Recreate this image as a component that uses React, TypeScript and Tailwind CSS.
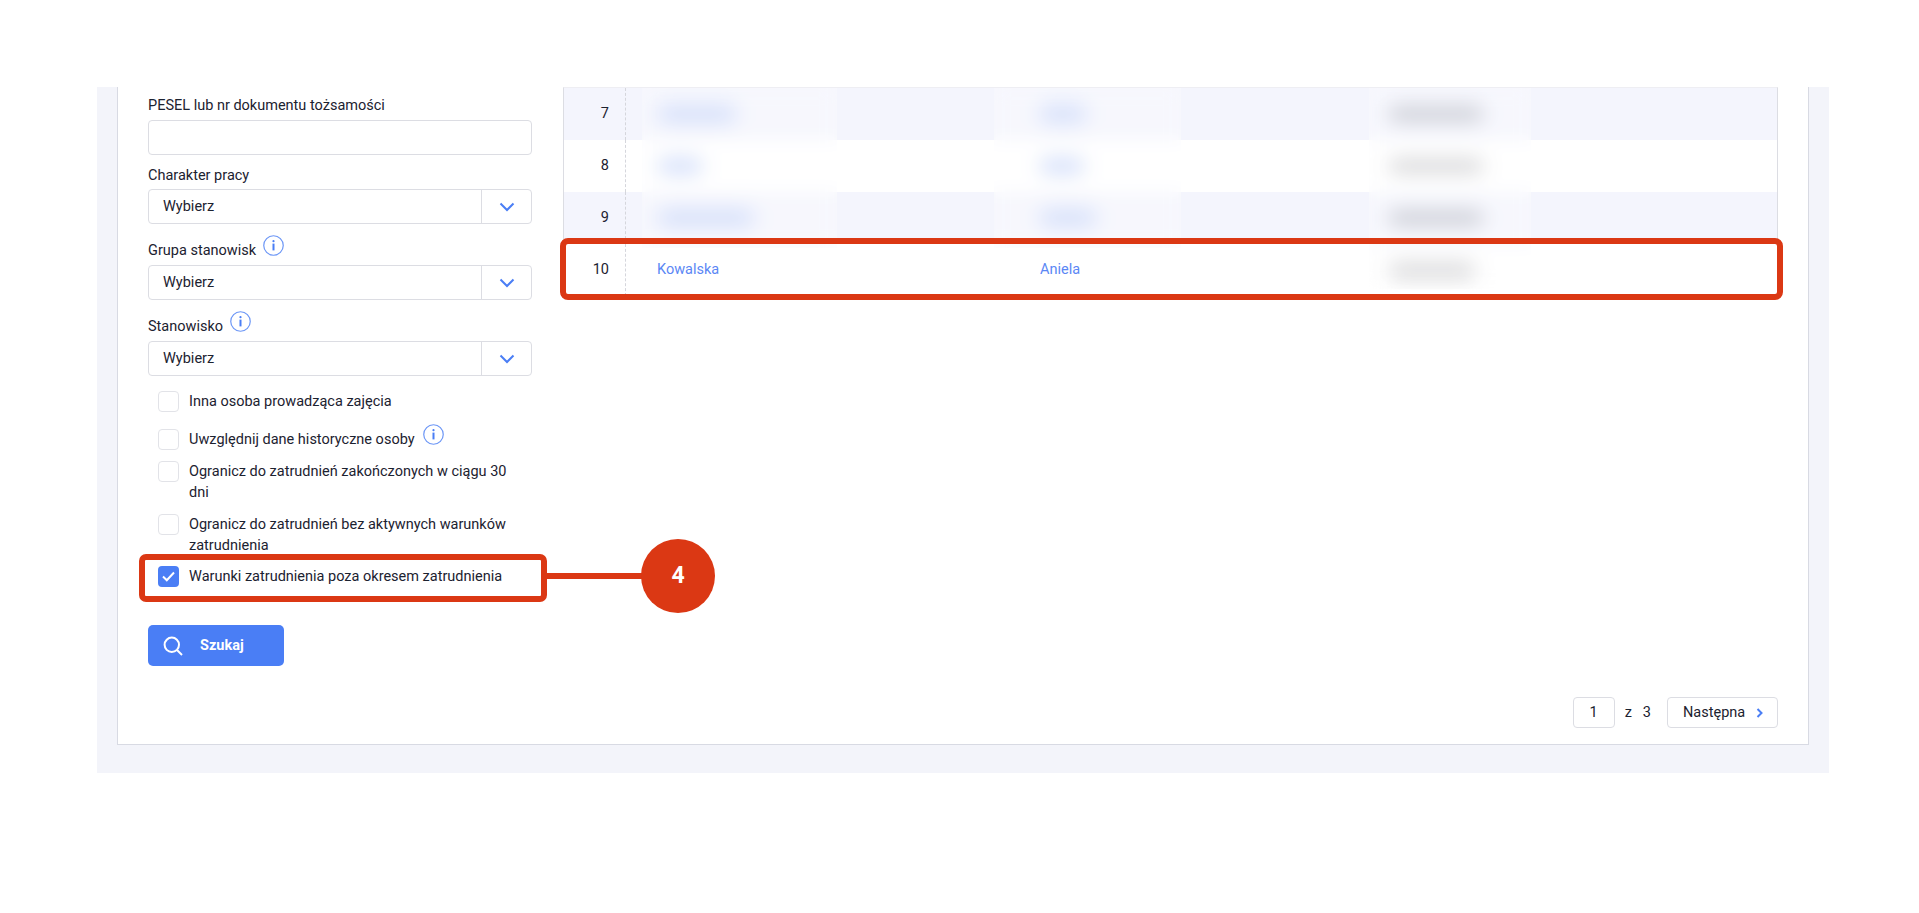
const rows = [
  { no: 7, first: "w-[78px]", second: "w-[46px]", third: "bg-[#b4b7c2]", stripe: true },
  { no: 8, first: "w-[44px]", second: "w-[44px]", third: "bg-[#c6c6c9]", stripe: false },
  { no: 9, first: "w-[96px]", second: "w-[56px]", third: "bg-[#b4b7c2]", stripe: true },
];

function Chevron() {
  return (
    <svg width="16" height="10" viewBox="0 0 16 10" fill="none" className="text-[#4a7ef5]">
      <path d="M1.5 1.5 8 8l6.5-6.5" stroke="currentColor" strokeWidth="2" />
    </svg>
  );
}

function InfoIcon({ className }: { className?: string }) {
  return (
    <svg width="21" height="21" viewBox="0 0 21 21" fill="none" className={className}>
      <circle cx="10.5" cy="10.5" r="9.75" stroke="#6d97f6" strokeWidth="1.2" />
      <circle cx="10.5" cy="6.2" r="1.1" fill="#4a7ef5" />
      <rect x="9.5" y="8.6" width="2" height="6.8" fill="#4a7ef5" />
    </svg>
  );
}

function Select() {
  return (
    <div className="flex h-[35px] items-center rounded-[4px] border border-[#dcdde3] bg-white">
      <span className="flex-1 pl-[14px] text-[14.5px]">Wybierz</span>
      <span className="flex h-full w-[50px] items-center justify-center border-l border-[#dcdde3]">
        <Chevron />
      </span>
    </div>
  );
}

function Checkbox({ checked, label, className }: { checked?: boolean; label: React.ReactNode; className?: string }) {
  return (
    <div className={`flex items-start gap-[10px] pl-[10px] pr-[6px] text-[14.5px] leading-[21px] ${className ?? ""}`}>
      <span
        className={
          checked
            ? "flex h-[21px] w-[21px] shrink-0 items-center justify-center rounded-[4px] bg-[#4a7ef5]"
            : "h-[21px] w-[21px] shrink-0 rounded-[4px] border border-[#e2e3e8] bg-white"
        }
      >
        {checked && (
          <svg width="13" height="11" viewBox="0 0 13 11" fill="none">
            <path d="M1 5.5 4.8 9.2 12 1.5" stroke="white" strokeWidth="2" />
          </svg>
        )}
      </span>
      <span>{label}</span>
    </div>
  );
}

function Filters() {
  return (
    <div className="w-[384px] shrink-0 pt-[8px]">
      <div className="text-[14.5px] leading-[21px]">PESEL lub nr dokumentu tożsamości</div>
      <input className="mt-[4px] block h-[35px] w-full rounded-[4px] border border-[#dcdde3] bg-white" />

      <div className="mt-[10px] mb-[3px] text-[14.5px] leading-[21px]">Charakter pracy</div>
      <Select />

      <div className="mt-[11px] mb-[4px] flex items-start gap-[7px] text-[14.5px] leading-[21px]">
        <span className="mt-[5px]">Grupa stanowisk</span>
        <InfoIcon />
      </div>
      <Select />

      <div className="mt-[11px] mb-[4px] flex items-start gap-[7px] text-[14.5px] leading-[21px]">
        <span className="mt-[5px]">Stanowisko</span>
        <InfoIcon />
      </div>
      <Select />

      <Checkbox className="mt-[15px]" label="Inna osoba prowadząca zajęcia" />
      <Checkbox
        className="mt-[17px]"
        label={
          <span className="flex items-start gap-[8px]">
            <span>Uwzględnij dane historyczne osoby</span>
            <InfoIcon className="-mt-[5px]" />
          </span>
        }
      />
      <Checkbox className="mt-[11px]" label="Ogranicz do zatrudnień zakończonych w ciągu 30 dni" />
      <Checkbox className="mt-[11px]" label="Ogranicz do zatrudnień bez aktywnych warunków zatrudnienia" />
      <Checkbox className="mt-[10px]" checked label="Warunki zatrudnienia poza okresem zatrudnienia" />

      <button className="mt-[38px] flex h-[41px] w-[136px] items-center gap-[17px] rounded-[5px] bg-[#4a7ef5] pl-[15px] text-[14.5px] font-bold text-white">
        <svg width="20" height="20" viewBox="0 0 20 20" fill="none">
          <circle cx="8.8" cy="8.8" r="7.2" stroke="white" strokeWidth="2" />
          <path d="m14 14 5 5" stroke="white" strokeWidth="2" />
        </svg>
        Szukaj
      </button>
    </div>
  );
}

function ResultsTable() {
  return (
    <div className="relative border-x border-t border-x-[#dcdde3] border-t-[#eeeef3]">
      {rows.map((r) => (
        <div
          key={r.no}
          className={`grid h-[52px] grid-cols-[62px_382px_349px_1fr] items-center ${r.stripe ? "bg-[#f4f5fd]" : "bg-white"}`}
        >
          <div className="flex h-full items-center justify-end border-r border-dashed border-[#d5d6dc] pr-[16px] text-[14.5px]">
            {r.no}
          </div>
          <div className="pl-[32px]">
            <div className={`h-[16px] rounded-full bg-[#c3d2f8] blur-[7px] ${r.first}`} />
          </div>
          <div className="pl-[32px]">
            <div className={`h-[16px] rounded-full bg-[#c3d2f8] blur-[7px] ${r.second}`} />
          </div>
          <div className="pl-[32px]">
            <div className={`h-[14px] w-[94px] rounded-full blur-[7px] ${r.third}`} />
          </div>
        </div>
      ))}
      <div className="grid h-[52px] grid-cols-[62px_382px_349px_1fr] items-center bg-white">
        <div className="flex h-full items-center justify-end border-r border-dashed border-[#d5d6dc] pr-[16px] text-[14.5px]">
          10
        </div>
        <div className="pl-[31px] text-[14.5px] text-[#5b87f5]">Kowalska</div>
        <div className="pl-[32px] text-[14.5px] text-[#5b87f5]">Aniela</div>
        <div className="pl-[32px]">
          <div className="h-[14px] w-[86px] rounded-full bg-[#c6c6c9] blur-[7px]" />
        </div>
      </div>

      {/* blurred patches from the original screenshot */}
      <div className="absolute left-[78px] top-0 h-[160px] w-[195px] bg-white/25 backdrop-blur-[8px]" />
      <div className="absolute left-[430px] top-0 h-[160px] w-[187px] bg-white/25 backdrop-blur-[8px]" />
      <div className="absolute left-[805px] top-0 h-[201px] w-[162px] bg-white/25 backdrop-blur-[8px]" />
    </div>
  );
}

function Pagination() {
  return (
    <div className="mt-auto flex items-center justify-end pb-[16px] text-[14.5px]">
      <div className="flex h-[31px] w-[42px] items-center justify-center rounded-[4px] border border-[#dcdde3]">1</div>
      <span className="ml-[10px]">z</span>
      <span className="ml-[11px]">3</span>
      <button className="ml-[16px] flex h-[31px] w-[111px] items-center rounded-[4px] border border-[#dcdde3] pl-[15px]">
        Następna
        <svg width="8" height="10" viewBox="0 0 8 10" fill="none" className="ml-[11px]">
          <path d="M1.5 1 5.5 5l-4 4" stroke="#4a7ef5" strokeWidth="2" />
        </svg>
      </button>
    </div>
  );
}

export default function App() {
  return (
    <div className="relative h-[913px] overflow-hidden bg-white pt-[87px] font-['Roboto',sans-serif] text-[#1c2230]">
      <div className="ml-[97px] h-[686px] w-[1732px] bg-[#f3f4fa] px-[20px] pb-[28px]">
        <div className="flex h-full gap-[31px] border-x border-b border-[#d8dae3] bg-white px-[30px]">
          <Filters />
          <div className="flex min-w-0 flex-1 flex-col">
            <ResultsTable />
            <Pagination />
          </div>
        </div>
      </div>

      {/* red annotations */}
      <div className="absolute left-[560px] top-[238px] h-[62px] w-[1223px] rounded-[8px] border-[6px] border-[#db3814]" />
      <div className="absolute left-[139px] top-[554px] h-[48px] w-[408px] rounded-[7px] border-[6px] border-[#db3814]" />
      <div className="absolute left-[546px] top-[573px] h-[6px] w-[100px] bg-[#db3814]" />
      <div className="absolute left-[641px] top-[539px] flex h-[74px] w-[74px] items-center justify-center rounded-full bg-[#db3814] pt-[1px] text-[23px] font-bold text-white">
        4
      </div>
    </div>
  );
}
